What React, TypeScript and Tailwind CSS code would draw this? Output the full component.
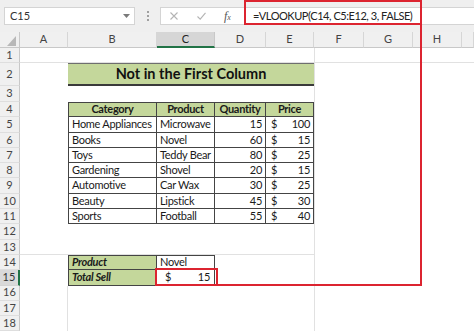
import React from "react";

const data: [string, string, number, number][] = [
  ["Home Appliances", "Microwave", 15, 100],
  ["Books", "Novel", 60, 15],
  ["Toys", "Teddy Bear", 80, 25],
  ["Gardening", "Shovel", 20, 15],
  ["Automotive", "Car Wax", 30, 25],
  ["Beauty", "Lipstick", 45, 30],
  ["Sports", "Football", 55, 40],
];

function RowHead({ n, active }: { n: number; active?: boolean }) {
  return active ? (
    <div className="flex items-center justify-center bg-[#d9d9d9] border-r-2 border-r-[#217346] border-b border-b-[#d4d4d4] text-[11px] text-[#333] tracking-normal">
      {n}
    </div>
  ) : (
    <div className="flex items-center justify-center bg-[#f0f0f0] border-r border-r-[#c8c8c8] border-b border-b-[#dedede] text-[11px] text-[#444] tracking-normal">
      {n}
    </div>
  );
}

function ColHead({ l, active }: { l: string; active?: boolean }) {
  return active ? (
    <div className="flex items-center justify-center bg-[#d6d6d6] border-r border-r-[#c8c8c8] border-b-2 border-b-[#217346] text-[11px] text-[#222] tracking-normal">
      {l}
    </div>
  ) : (
    <div className="flex items-center justify-center bg-[#f0f0f0] border-r border-r-[#d6d6d6] border-b border-b-[#c8c8c8] text-[11px] text-[#444] tracking-normal">
      {l}
    </div>
  );
}

const E = () => <div />;
const FCell = () => <div className="border-l border-l-[#e1e1e1]" />;

export default function App() {
  return (
    <div className="relative w-[474px] h-[333px] overflow-hidden bg-white font-['Lato',sans-serif] text-[#1a1a1a]">
      {/* Formula bar */}
      <div className="h-[32px] bg-[#efefef] flex items-start pt-[7px]">
        <div className="ml-[4px] w-[131px] h-[18px] bg-white border border-[#d4d4d4] flex items-center justify-between pl-[5px] pr-[4px]">
          <span className="text-[11px] text-[#333]">C15</span>
          <svg width="7" height="4" viewBox="0 0 7 4">
            <path d="M0 0h7L3.5 4z" fill="#7a7a7a" />
          </svg>
        </div>
        <div className="w-[25px] h-[18px] flex flex-col items-center justify-center gap-[2px]">
          <div className="w-[2px] h-[2px] bg-[#a0a0a0]" />
          <div className="w-[2px] h-[2px] bg-[#a0a0a0]" />
          <div className="w-[2px] h-[2px] bg-[#a0a0a0]" />
        </div>
        <div className="flex-1 h-[18px] bg-white border-y border-l border-[#d4d4d4] flex items-center">
          <svg className="ml-[9px]" width="8" height="8" viewBox="0 0 8 8">
            <path d="M0.5 0.5L7.5 7.5M7.5 0.5L0.5 7.5" stroke="#b4b4b4" strokeWidth="1.1" fill="none" />
          </svg>
          <svg className="ml-[19px]" width="9" height="8" viewBox="0 0 9 8">
            <path d="M0.5 4.5L3.2 7.2L8.5 0.8" stroke="#b4b4b4" strokeWidth="1.1" fill="none" />
          </svg>
          <span className="ml-[18px] font-['Liberation_Serif',serif] italic text-[12px] text-[#555] leading-none">
            f<span className="text-[8px]">x</span>
          </span>
          <span className="ml-[22px] text-[11px] tracking-[-0.45px] text-[#222] whitespace-nowrap">=VLOOKUP(C14, C5:E12, 3, FALSE)</span>
        </div>
      </div>

      {/* Sheet grid */}
      <div className="grid grid-cols-[20px_48px_89px_58px_51px_48px_50px_49px_49px_1fr] grid-rows-[16px_15px_23px_16px_repeat(15,15.3px)] tracking-[-0.3px]">
        {/* Column headers */}
        <div className="flex items-end justify-end pr-[3px] pb-[1px] bg-[#f0f0f0] border-r border-r-[#c8c8c8] border-b border-b-[#c8c8c8]">
          <svg width="9" height="10" viewBox="0 0 9 10">
            <path d="M9 0V10H0z" fill="#b8b8b8" />
          </svg>
        </div>
        <ColHead l="A" />
        <ColHead l="B" />
        <ColHead l="C" active />
        <ColHead l="D" />
        <ColHead l="E" />
        <ColHead l="F" />
        <ColHead l="G" />
        <ColHead l="H" />
        <ColHead l="" />

        {/* Row 1 */}
        <RowHead n={1} />
        <div className="border-b border-b-[#e1e1e1]" />
        <div className="border-b border-b-[#e1e1e1]" />
        <div className="border-b border-b-[#e1e1e1]" />
        <div className="border-b border-b-[#e1e1e1]" />
        <div className="border-b border-b-[#e1e1e1]" />
        <div className="border-b border-b-[#e1e1e1] border-l border-l-[#e1e1e1]" />
        <div className="border-b border-b-[#e1e1e1]" />
        <div className="border-b border-b-[#e1e1e1]" />
        <div className="border-b border-b-[#e1e1e1]" />

        {/* Row 2 */}
        <RowHead n={2} />
        <E />
        <div className="col-span-4 bg-[#c4d79b] border-t border-t-[#6e6e6e] border-b-2 border-b-[#3a3a3a] flex items-center justify-center font-bold text-[14.5px] tracking-normal text-[#111]">
          Not in the First Column
        </div>
        <FCell />
        <E />
        <E />
        <E />

        {/* Row 3 */}
        <RowHead n={3} />
        <E />
        <E />
        <E />
        <E />
        <E />
        <FCell />
        <E />
        <E />
        <E />

        {/* Row 4 header */}
        <RowHead n={4} />
        <E />
        <div className="bg-[#c4d79b] border border-[#444] flex items-center justify-center font-bold text-[11px]">Category</div>
        <div className="bg-[#c4d79b] border-y border-r border-[#444] flex items-center justify-center font-bold text-[11px]">Product</div>
        <div className="bg-[#c4d79b] border-y border-r border-[#444] flex items-center justify-center font-bold text-[11px]">Quantity</div>
        <div className="bg-[#c4d79b] border-y border-r border-[#444] flex items-center justify-center font-bold text-[11px]">Price</div>
        <FCell />
        <E />
        <E />
        <E />

        {/* Rows 5-11 */}
        {data.map(([cat, prod, qty, price], i) => (
          <React.Fragment key={cat}>
            <RowHead n={5 + i} />
            <E />
            <div className="border-l border-r border-b border-[#444] flex items-center pl-[3px] text-[11px] whitespace-nowrap">{cat}</div>
            <div className="border-r border-b border-[#444] flex items-center pl-[3px] text-[11px] whitespace-nowrap">{prod}</div>
            <div className="border-r border-b border-[#444] flex items-center justify-end pr-[3px] text-[11px]">{qty}</div>
            <div className="border-r border-b border-[#444] flex items-center justify-between pl-[5px] pr-[3px] text-[11px]">
              <span>$</span>
              <span>{price}</span>
            </div>
            <FCell />
            <E />
            <E />
            <E />
          </React.Fragment>
        ))}

        {/* Row 12 */}
        <RowHead n={12} />
        <E />
        <E />
        <E />
        <E />
        <E />
        <FCell />
        <E />
        <E />
        <E />

        {/* Row 13 */}
        <RowHead n={13} />
        <div className="border-b border-b-[#e1e1e1]" />
        <div className="border-b border-b-[#e1e1e1]" />
        <div className="border-b border-b-[#e1e1e1]" />
        <div className="border-b border-b-[#e1e1e1]" />
        <div className="border-b border-b-[#e1e1e1]" />
        <FCell />
        <E />
        <E />
        <E />

        {/* Row 14 */}
        <RowHead n={14} />
        <E />
        <div className="bg-[#c4d79b] border border-[#444] flex items-center pl-[3px] font-bold italic text-[11px]">Product</div>
        <div className="border-y border-r border-[#444] flex items-center pl-[3px] text-[11px]">Novel</div>
        <E />
        <E />
        <FCell />
        <E />
        <E />
        <E />

        {/* Row 15 */}
        <RowHead n={15} active />
        <E />
        <div className="bg-[#c4d79b] border-l border-r border-b border-[#444] flex items-center pl-[3px] font-bold italic text-[11px]">Total Sell</div>
        <div className="border-r border-b border-[#444] flex items-center justify-between pl-[8px] pr-[4px] text-[11px]">
          <span>$</span>
          <span>15</span>
        </div>
        <E />
        <E />
        <FCell />
        <E />
        <E />
        <E />

        {/* Rows 16-18 */}
        {[16, 17, 18].map((n) => (
          <React.Fragment key={n}>
            <RowHead n={n} />
            <div className="border-r border-r-[#e1e1e1]" />
            <E />
            <E />
            <E />
            <E />
            <FCell />
            <E />
            <E />
            <E />
          </React.Fragment>
        ))}
      </div>

      {/* Red annotation overlays */}
      <div className="absolute left-[244px] top-[0px] w-[178px] h-[25px] border-2 border-[#dc2430]" />
      <div className="absolute left-[420px] top-[24px] w-[2px] h-[262px] bg-[#dc2430]" />
      <div className="absolute left-[216px] top-[284px] w-[206px] h-[2px] bg-[#dc2430]" />
      <div className="absolute left-[155px] top-[268px] w-[63px] h-[18px] border-2 border-[#dc2430]" />
    </div>
  );
}
